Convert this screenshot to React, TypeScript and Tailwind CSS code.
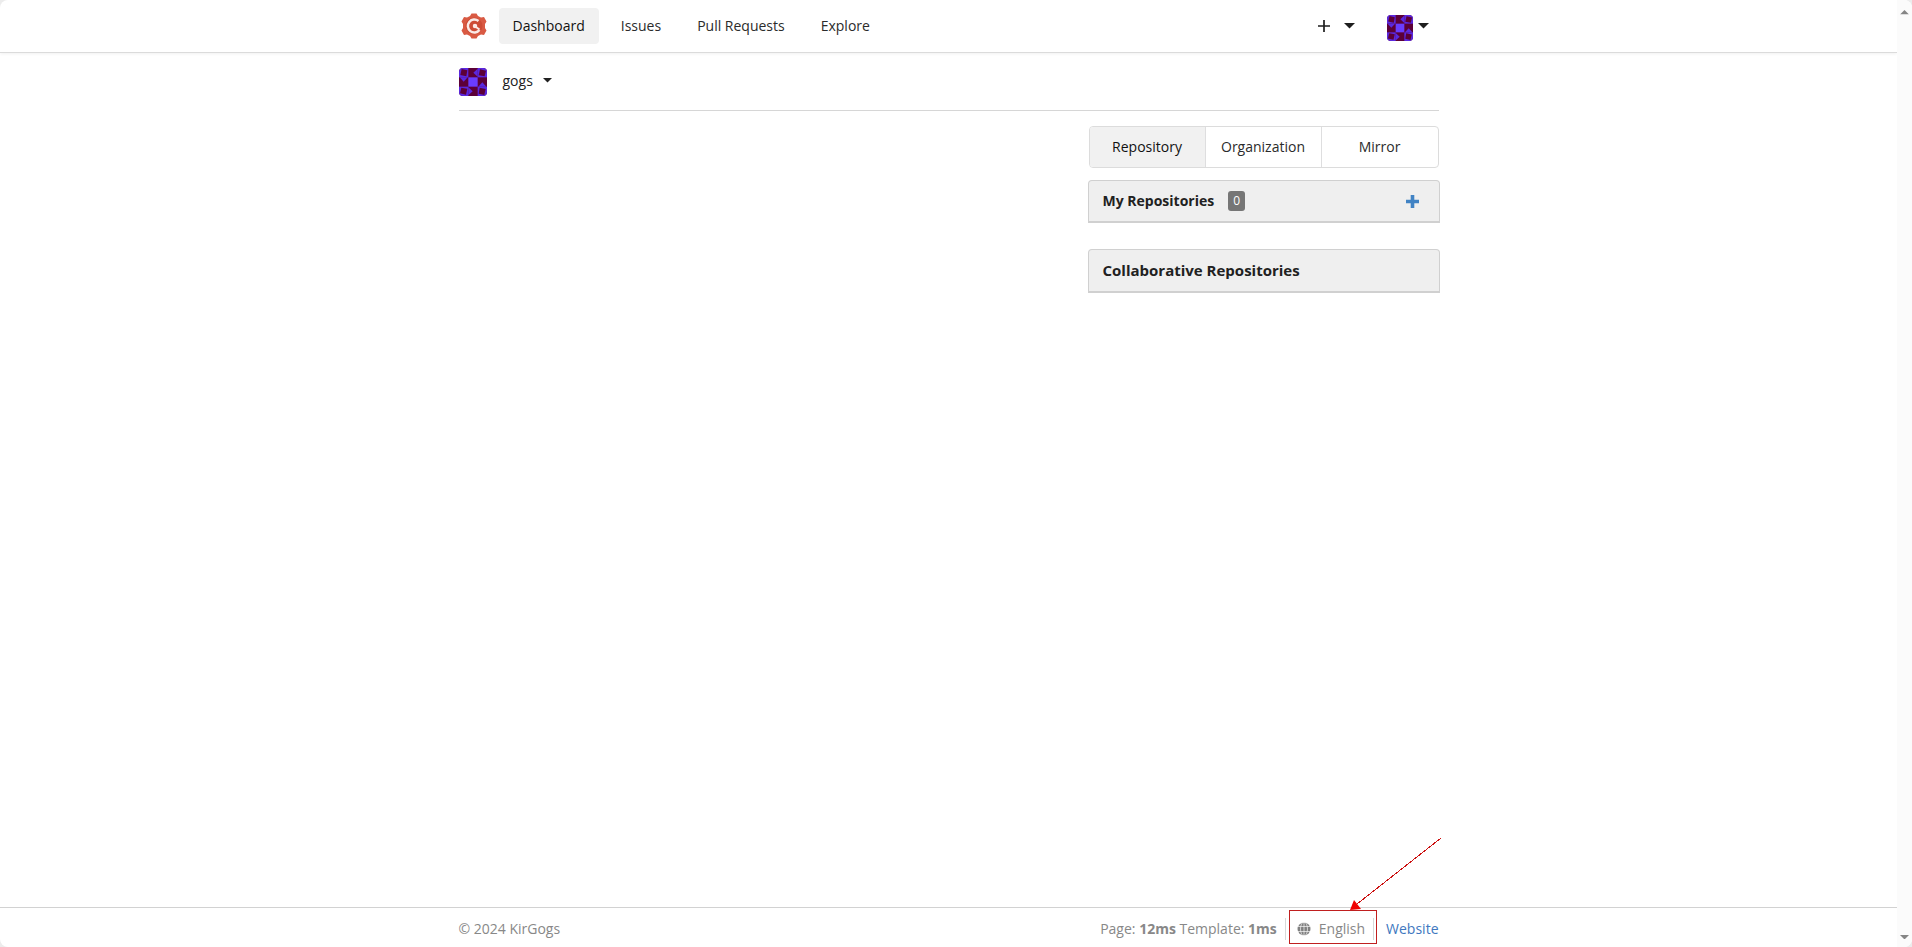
import { ReactNode } from 'react';

const NAV_ITEMS = [
  { label: 'Dashboard', active: true },
  { label: 'Issues', active: false },
  { label: 'Pull Requests', active: false },
  { label: 'Explore', active: false },
];

function GogsLogo() {
  return (
    <svg viewBox="0 0 52 52" className="size-[26px]" aria-hidden="true">
      <path
        d="M21 1h10l3 5 6 3 6-1 5 9-3 5v8l3 5-5 9-6-1-6 3-3 5H21l-3-5-6-3-6 1-5-9 3-5v-8l-3-5 5-9 6 1 6-3z"
        fill="#d95a43"
      />
      <circle cx="26" cy="26" r="17" fill="#cd4c35" />
      <path d="M35 16A13 13 0 1 0 37 34" fill="none" stroke="#fbeae6" strokeWidth="5" />
      <path d="M27 26L37 33" stroke="#fbeae6" strokeWidth="4" />
      <circle cx="28" cy="26" r="4.5" fill="#fbeae6" />
    </svg>
  );
}

function Avatar({ className }: { className: string }) {
  return (
    <svg viewBox="0 0 84 84" className={className} role="img" aria-label="gogs">
      <rect width="84" height="84" fill="#5c0038" />
      {[0, 90, 180, 270].map((angle) => (
        <g key={angle} transform={`rotate(${angle} 42 42)`}>
          <rect width="28" height="28" fill="#5a28e0" />
          <path d="M8 3l17 4-3 18-18-4z" fill="#5c0038" />
          <path d="M43 14L56 2v24z" fill="#5a28e0" />
        </g>
      ))}
      <rect x="28" y="28" width="28" height="28" fill="#6a3cff" />
    </svg>
  );
}

function Caret({ className = 'w-[11px]' }: { className?: string }) {
  return (
    <svg viewBox="0 0 12 6" className={className} fill="currentColor" aria-hidden="true">
      <path d="M0 0h12L6 6z" />
    </svg>
  );
}

function Globe() {
  return (
    <svg viewBox="0 0 28 28" className="size-3.5" aria-hidden="true">
      <circle cx="14" cy="14" r="13" fill="#808080" />
      <g fill="none" stroke="#fff" strokeWidth="1.3">
        <path d="M14 0v28M2 9h24M2 19h24" />
        <ellipse cx="14" cy="14" rx="7" ry="14" />
      </g>
    </svg>
  );
}

function PanelHeader({ className, children }: { className: string; children: ReactNode }) {
  return (
    <div className={`flex items-center rounded-t border border-b-2 border-[#d0d0d0] bg-[#efefef] pr-5 pl-3.5 ${className}`}>
      {children}
    </div>
  );
}

function Navbar() {
  return (
    <header className="border-b border-[#dbdbdb] shadow-[0_1px_3px_rgba(0,0,0,0.06)]">
      <nav className="mx-auto flex h-[52px] w-full max-w-[980px] items-center">
        <a href="#" aria-label="Home" className="mr-3 ml-0.5">
          <GogsLogo />
        </a>
        {NAV_ITEMS.map((item) => (
          <a
            key={item.label}
            href="#"
            className={`mr-2 flex h-9 items-center rounded px-3.5 ${
              item.active ? 'bg-[#f1f1f1] text-[#111]' : 'text-[#2b2b2b]'
            }`}
          >
            {item.label}
          </a>
        ))}
        <div className="mr-2.5 ml-auto flex items-center gap-8">
          <button type="button" aria-label="Create" className="flex items-center gap-3.5 text-[#1e1e1e]">
            <svg viewBox="0 0 12 12" className="size-3" aria-hidden="true">
              <path d="M6 0v12M0 6h12" stroke="currentColor" strokeWidth="1.7" />
            </svg>
            <Caret />
          </button>
          <button type="button" aria-label="Account" className="flex items-center gap-[5px] text-[#1e1e1e]">
            <Avatar className="mt-1 size-[26px] rounded" />
            <Caret />
          </button>
        </div>
      </nav>
    </header>
  );
}

function RepoSidebar() {
  return (
    <aside className="-mr-px ml-auto w-[352px]">
      <div className="mx-px mb-3 grid h-[42px] grid-cols-3 divide-x divide-[#dededf] overflow-hidden rounded border border-[#dcdcdc] text-[#2b2b2b]">
        <button type="button" className="bg-[#f1f1f1] text-[#111]">Repository</button>
        <button type="button">Organization</button>
        <button type="button">Mirror</button>
      </div>
      <PanelHeader className="mb-[26px] h-[43px]">
        <h2 className="font-bold">My Repositories</h2>
        <span className="ml-3.5 flex h-5 w-[17px] items-center justify-center rounded-[3px] bg-[#767676] text-xs text-white">
          0
        </span>
        <a href="#" aria-label="New repository" className="ml-auto">
          <svg viewBox="0 0 13 13" className="size-[13px]" aria-hidden="true">
            <path d="M6.5 0v13M0 6.5h13" stroke="#4183c4" strokeWidth="3.6" />
          </svg>
        </a>
      </PanelHeader>
      <PanelHeader className="h-11">
        <h2 className="text-[15px] font-bold">Collaborative Repositories</h2>
      </PanelHeader>
    </aside>
  );
}

/* Red box and arrow pointing at the language switch */
function LanguageCallout() {
  return (
    <>
      <div className="pointer-events-none absolute -top-2 -right-3 -bottom-1 -left-2 border border-[#c01f1f]" />
      <svg
        viewBox="0 0 94 76"
        className="pointer-events-none absolute bottom-7 left-[52px] h-[76px] w-[94px]"
        aria-hidden="true"
      >
        <path d="M92 2L8 68" stroke="#cc1111" strokeWidth="1" shapeRendering="crispEdges" />
        <path d="M1 74L5 64L12 73z" fill="#f00000" />
      </svg>
    </>
  );
}

function Footer() {
  return (
    <footer className="border-t border-[#d2d2d2] text-[#888]">
      <div className="mx-auto flex h-[39px] w-full max-w-[980px] items-center pt-0.5">
        <span>© 2024 KirGogs</span>
        <span className="ml-auto pr-2">
          Page: <strong>12ms</strong> Template: <strong>1ms</strong>
        </span>
        <div className="flex items-center border-x border-[#d8d8d8] pr-2 pl-[11px]">
          <button type="button" className="relative flex h-[22px] items-center gap-2">
            <Globe />
            English
            <LanguageCallout />
          </button>
        </div>
        <a href="#" className="ml-3 text-[#4078c0]">
          Website
        </a>
      </div>
    </footer>
  );
}

function ScrollTrack() {
  return (
    <div className="flex w-[15px] flex-col items-center justify-between bg-[#fbfbfb] pt-2.5 pb-2 text-[#858585]">
      <Caret className="w-[9px] rotate-180" />
      <Caret className="w-[9px]" />
    </div>
  );
}

export default function App() {
  return (
    <div className="bg-[#ececec]">
      <div className="flex min-h-screen overflow-hidden rounded-lg bg-white font-['Open_Sans',sans-serif] text-sm text-[#212121]">
        <div className="flex flex-1 flex-col">
          <Navbar />
          <main className="mx-auto w-full max-w-[980px] grow">
            <div className="mb-[15px] flex h-[58px] items-center border-b border-[#d6d6d6]">
              <Avatar className="size-7 rounded" />
              <button type="button" className="ml-4 flex items-center gap-2.5 pb-0.5">
                gogs
                <Caret className="w-[9px]" />
              </button>
            </div>
            <RepoSidebar />
          </main>
          <Footer />
        </div>
        <ScrollTrack />
      </div>
    </div>
  );
}
